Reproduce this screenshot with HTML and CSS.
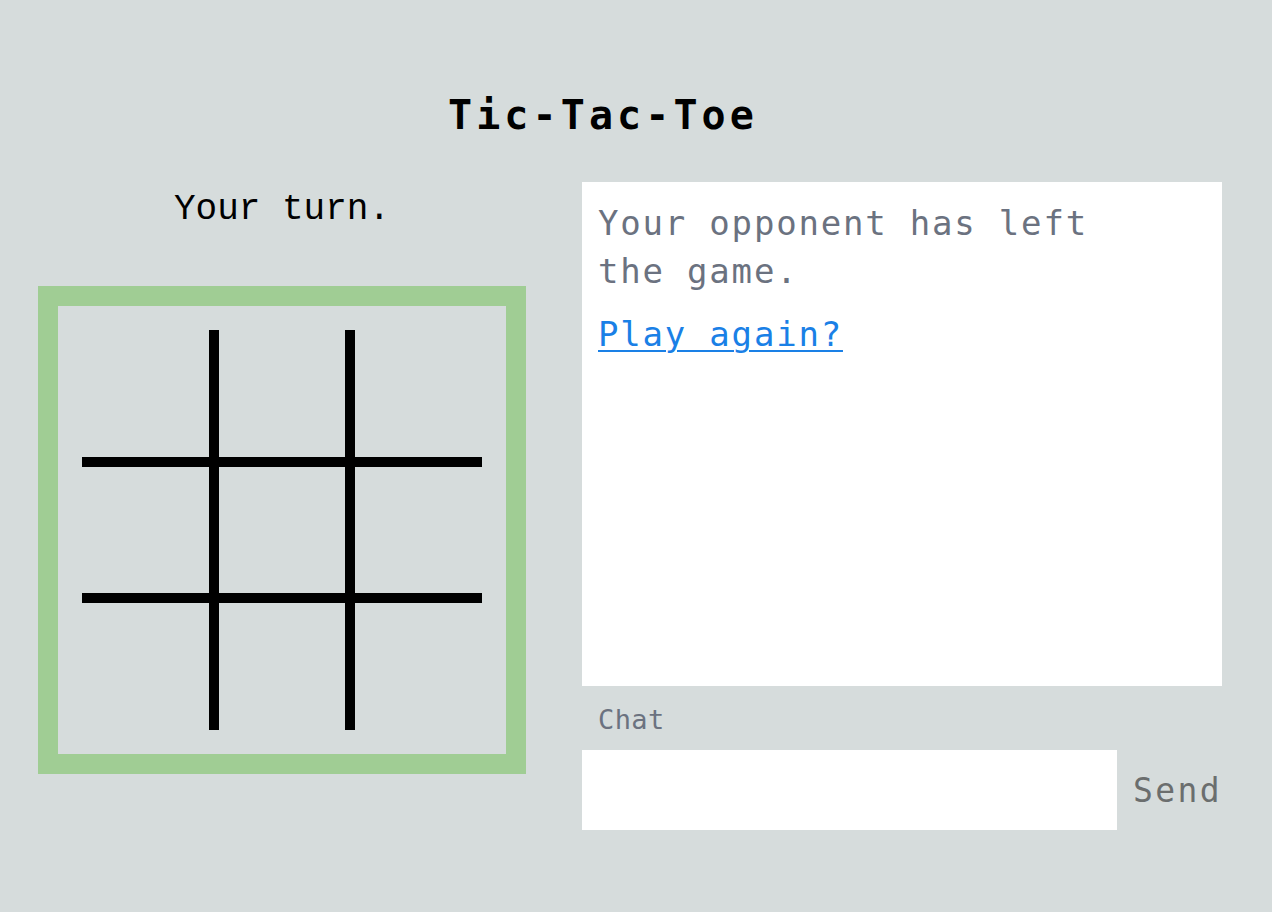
FILE: index.html
```html
<!DOCTYPE html>
<html lang="en">
<head>
<meta charset="utf-8">
<title>Tic-Tac-Toe</title>
<link rel="stylesheet" href="styles.css">
</head>
<body>
<header class="header">
  <h1 class="title">Tic-Tac-Toe</h1>
</header>
<main class="layout">
  <section class="game">
    <p class="status">Your turn.</p>
    <div class="board">
      <div class="grid">
        <div class="cell"></div><div class="cell"></div><div class="cell"></div>
        <div class="cell"></div><div class="cell"></div><div class="cell"></div>
        <div class="cell"></div><div class="cell"></div><div class="cell"></div>
      </div>
    </div>
  </section>
  <section class="side">
    <div class="messages">
      <p class="message">Your opponent has left the game.</p>
      <a class="again" href="#">Play again?</a>
    </div>
    <label class="chat-label" for="chat">Chat</label>
    <div class="chat-row">
      <input class="chat-input" id="chat" type="text">
      <button class="send" type="button">Send</button>
    </div>
  </section>
</main>
</body>
</html>
```
FILE: styles.css
```css
html, body {
  margin: 0;
  padding: 0;
}
body {
  background: #d6dcdc;
  font-family: "DejaVu Sans Mono", monospace;
  width: 1272px;
  height: 912px;
  overflow: hidden;
}
.header {
  padding-top: 93px;
  padding-right: 66px;
  text-align: center;
}
.title {
  margin: 0;
  font-size: 40px;
  font-weight: bold;
  letter-spacing: 4.1px;
  line-height: 45px;
  color: #000;
}
.layout {
  display: flex;
  gap: 56px;
  padding-left: 38px;
  margin-top: 44px;
}
.game {
  width: 488px;
  display: flex;
  flex-direction: column;
}
.status {
  margin: 0;
  padding-top: 3px;
  font-family: "Liberation Mono", monospace;
  font-size: 36px;
  line-height: 50px;
  text-align: center;
  color: #000;
}
.board {
  margin-top: 51px;
  width: 488px;
  height: 488px;
  box-sizing: border-box;
  border: 20px solid #a0cd94;
  padding: 24px;
}
.grid {
  width: 400px;
  height: 400px;
  display: grid;
  grid-template-columns: 1fr 1fr 1fr;
  grid-template-rows: 1fr 1fr 1fr;
  gap: 10px;
  background: #000;
}
.cell {
  background: #d6dcdc;
}
.side {
  width: 640px;
  display: flex;
  flex-direction: column;
}
.messages {
  height: 504px;
  box-sizing: border-box;
  background: #fff;
  padding: 17px 16px;
}
.message {
  margin: 0 0 15px 0;
  width: 540px;
  font-size: 34px;
  letter-spacing: 1.8px;
  line-height: 48px;
  color: #6b7280;
}
.again {
  font-size: 34px;
  letter-spacing: 1.8px;
  line-height: 48px;
  color: #1a80e6;
  text-decoration: underline;
  text-decoration-thickness: 2px;
  text-underline-offset: 4px;
}
.chat-label {
  margin-top: 18px;
  padding-left: 16px;
  font-size: 27px;
  line-height: 31px;
  letter-spacing: 0.4px;
  color: #6b7280;
}
.chat-row {
  margin-top: 15px;
  display: flex;
  align-items: center;
}
.chat-input {
  flex: 1;
  height: 80px;
  box-sizing: border-box;
  border: none;
  background: #fff;
  margin: 0;
  padding: 0 16px;
  font-family: "DejaVu Sans Mono", monospace;
  font-size: 27px;
  outline: none;
}
.send {
  margin: 0 0 0 16px;
  padding: 0;
  border: none;
  background: transparent;
  font-family: "DejaVu Sans Mono", monospace;
  font-size: 33px;
  letter-spacing: 2.4px;
  color: #6b6e6e;
  cursor: pointer;
}
```
